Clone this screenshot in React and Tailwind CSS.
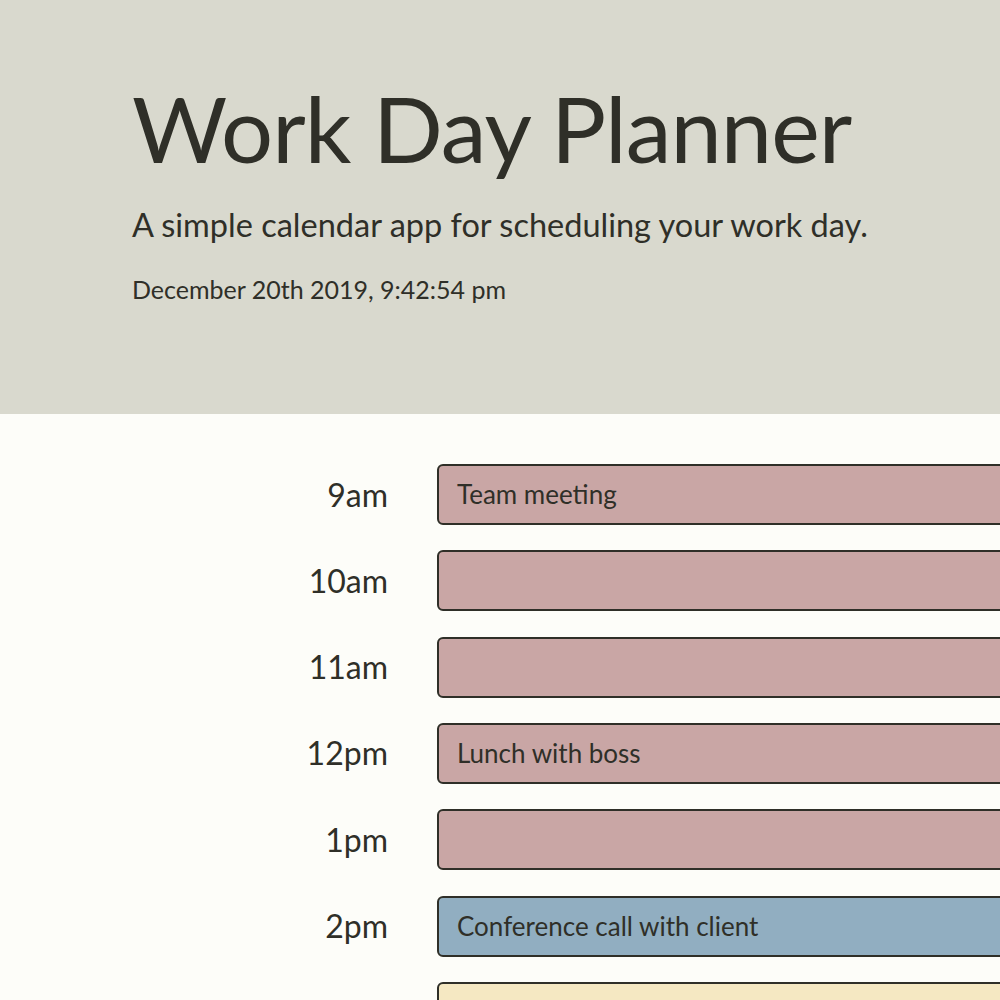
import React from "react";

const hours = [
  { label: "9am", text: "Team meeting", state: "past" },
  { label: "10am", text: "", state: "past" },
  { label: "11am", text: "", state: "past" },
  { label: "12pm", text: "Lunch with boss", state: "past" },
  { label: "1pm", text: "", state: "past" },
  { label: "2pm", text: "Conference call with client", state: "present" },
  { label: "3pm", text: "", state: "future" },
];

const stateClass = {
  past: "bg-[#c9a6a5]",
  present: "bg-[#91aec1]",
  future: "bg-[#f5e8c2]",
};

export default function App() {
  return (
    <div className="min-h-screen w-full overflow-hidden bg-[#fdfdf9] text-[#2f2f28] font-['Lato','Noto_Sans',sans-serif]">
      <header className="h-[414px] bg-[#d9d9ce] pl-[132px] pt-[78px]">
        <h1 className="text-[92px] leading-[100px] tracking-[-1px]">Work Day Planner</h1>
        <p className="mt-[27px] text-[32.5px] leading-[40px]">A simple calendar app for scheduling your work day.</p>
        <p className="mt-[29px] text-[25px] leading-[30px]">December 20th 2019, 9:42:54 pm</p>
      </header>

      <main className="flex flex-col gap-[25.33px] pt-[50px]">
        {hours.map((h) => (
          <div key={h.label} className="flex items-center">
            <div className="w-[388px] shrink-0 text-right text-[32px] leading-[36px]">{h.label}</div>
            <div
              className={`ml-[49px] flex h-[61px] w-[620px] shrink-0 items-center rounded-md border-2 border-[#2f2f28] pl-[18px] text-[26px] ${stateClass[h.state]}`}
            >
              {h.text}
            </div>
          </div>
        ))}
      </main>
    </div>
  );
}
